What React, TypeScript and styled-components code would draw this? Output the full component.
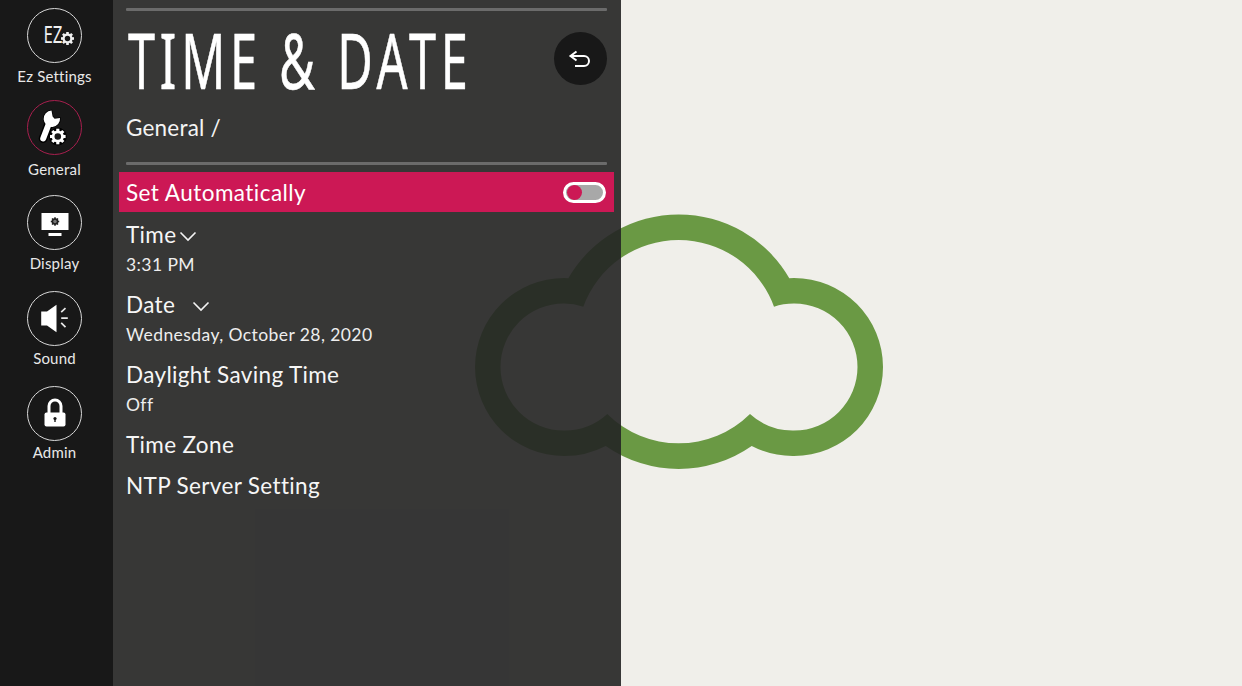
import React from 'react';
import styled, { createGlobalStyle } from 'styled-components';

const GlobalStyle = createGlobalStyle`
    html, body {
        margin: 0;
        padding: 0;
        width: 100%;
        height: 100%;
        overflow: hidden;
        background: #f0efea;
    }
    * {
        box-sizing: border-box;
    }
`;

const Screen = styled.div`
    position: relative;
    display: flex;
    width: 1242px;
    height: 686px;
    background: #f0efea;
    font-family: Lato, "Open Sans", sans-serif;
    color: #fff;
    overflow: hidden;
`;

const CloudLogo = styled.svg`
    position: absolute;
    left: 470px;
    top: 210px;
`;

const Sidebar = styled.div`
    position: relative;
    width: 113px;
    height: 100%;
    background: #181818;
    display: flex;
    flex-direction: column;
    align-items: center;
    padding: 8px 4px 0 0;
`;

const MenuItem = styled.div<{ $top: number }>`
    display: flex;
    flex-direction: column;
    align-items: center;
    margin-top: ${(p) => p.$top}px;
`;

const MenuCircle = styled.div<{ $active?: boolean }>`
    width: 55px;
    height: 55px;
    border-radius: 50%;
    border: 1.5px solid ${(p) => (p.$active ? '#a81f4e' : '#d8d8d8')};
    display: flex;
    align-items: center;
    justify-content: center;
`;

const MenuLabel = styled.div<{ $gap: number }>`
    margin-top: ${(p) => p.$gap}px;
    font-size: 15px;
    line-height: 18px;
    letter-spacing: 0.2px;
    color: #e8e8e8;
`;

const Panel = styled.div`
    position: relative;
    width: 508px;
    height: 100%;
    background: rgba(36, 36, 36, 0.91);
    padding: 8px 14px 0 13px;
`;

const Rule = styled.div`
    height: 3px;
    background: #6b6b6b;
    border-radius: 1px;
`;

const TitleRow = styled.div`
    display: flex;
    align-items: flex-start;
    justify-content: space-between;
    height: 98px;
    padding-top: 21px;
`;

const Title = styled.h1`
    width: 420px;
    flex: none;
    margin: -2px 0 0 2px;
    font-family: "Noto Sans", sans-serif;
    font-weight: 400;
    font-size: 76px;
    line-height: 60px;
    letter-spacing: 7.5px;
    white-space: nowrap;
    -webkit-text-stroke: 0.6px #fff;
    transform: scaleX(0.64);
    transform-origin: left center;
`;

const BackButton = styled.button`
    width: 53px;
    height: 53px;
    border: 0;
    padding: 0;
    border-radius: 50%;
    background: #181818;
    display: flex;
    align-items: center;
    justify-content: center;
`;

const Crumb = styled.div`
    font-size: 22.5px;
    line-height: 30px;
    letter-spacing: 0.2px;
    color: #f4f4f4;
    height: 53px;
    padding-top: 4px;
`;

const SelectedRow = styled.div`
    display: flex;
    align-items: center;
    justify-content: space-between;
    height: 40px;
    margin: 7px -7px 2px -7px;
    padding: 0 8px 0 7px;
    background: #cc1855;
    font-size: 22.5px;
    letter-spacing: 0.45px;
`;

const Toggle = styled.div`
    width: 43px;
    height: 21px;
    border: 3px solid #fff;
    border-radius: 11px;
    background: #a8a8a8;
    display: flex;
    align-items: center;
    overflow: hidden;
    &::before {
        content: '';
        width: 15px;
        height: 15px;
        margin-left: 1px;
        border-radius: 50%;
        background: #cc1855;
    }
`;

const Option = styled.div`
    margin-bottom: 10px;
`;

const OptionLabel = styled.div`
    display: flex;
    align-items: center;
    height: 41px;
    font-size: 22.5px;
    letter-spacing: 0.35px;
    color: #f6f6f6;
`;

const OptionValue = styled.div`
    height: 19px;
    line-height: 19px;
    font-size: 17.5px;
    letter-spacing: 0.42px;
    color: #eeeeee;
`;

const Chevron = styled.svg<{ $gap: number }>`
    margin-left: ${(p) => p.$gap}px;
    margin-top: 4px;
`;

const Gear = ({ cx, cy, r, color, hole }: { cx: number; cy: number; r: number; color: string; hole: string }) => (
    <g>
        <circle cx={cx} cy={cy} r={r * 0.78} fill={color} />
        {[0, 45, 90, 135, 180, 225, 270, 315].map((a) => (
            <rect
                key={a}
                x={cx - r * 0.2}
                y={cy - r}
                width={r * 0.4}
                height={r * 0.5}
                fill={color}
                transform={`rotate(${a} ${cx} ${cy})`}
            />
        ))}
        <circle cx={cx} cy={cy} r={r * 0.42} fill={hole} />
    </g>
);

const EzIcon = () => (
    <svg width="52" height="52" viewBox="0 0 52 52">
        <text x="14.5" y="33" fontFamily="Noto Sans, sans-serif" fontSize="23" fill="#f0f0f0" textLength="19" lengthAdjust="spacingAndGlyphs">EZ</text>
        <Gear cx={38.5} cy={28.5} r={6.5} color="#f0f0f0" hole="#181818" />
    </svg>
);

const WrenchIcon = () => (
    <svg width="52" height="52" viewBox="0 0 52 52">
        <path d="M14.2 36.5 L20.5 20" stroke="#000" strokeWidth="9" strokeLinecap="round" fill="none" />
        <path d="M22.5 8.6 L23.6 14.6 L25.6 16.8 L31 16 A8.2 8.2 0 1 1 22.5 8.6 Z" fill="#fff" stroke="#000" strokeWidth="1.5" paintOrder="stroke" />
        <path d="M14.2 36.5 L20.5 20" stroke="#fff" strokeWidth="6" strokeLinecap="round" fill="none" />
        <circle cx="28.8" cy="34.5" r="9" fill="#000" />
        <Gear cx={28.8} cy={34.5} r={7.8} color="#fff" hole="#181818" />
    </svg>
);

const DisplayIcon = () => (
    <svg width="52" height="52" viewBox="0 0 52 52">
        <rect x="12.5" y="16" width="27" height="17" fill="#fff" />
        <rect x="19.5" y="36" width="13" height="3" fill="#fff" />
        <Gear cx={26} cy={24.5} r={4.2} color="#222" hole="#777" />
    </svg>
);

const SoundIcon = () => (
    <svg width="52" height="52" viewBox="0 0 52 52">
        <path d="M12.2 18.5 L18 18.5 L27.5 11.8 L27.5 39.2 L18 32.5 L12.2 32.5 Z" fill="#fff" />
        <path d="M32.2 19.2 L36.5 15.2 M32.2 25.2 L38.8 25.2 M32.2 29.8 L36.5 34.2" stroke="#e8e8e8" strokeWidth="1.7" fill="none" />
    </svg>
);

const LockIcon = () => (
    <svg width="52" height="52" viewBox="0 0 52 52">
        <path d="M20 25 V18 A6 6 0 0 1 32 18 V25" stroke="#fff" strokeWidth="3" fill="none" />
        <rect x="15.5" y="24.5" width="21" height="14" rx="2" fill="#fff" />
        <circle cx="26" cy="30.5" r="1.6" fill="#181818" />
        <rect x="25.3" y="30.5" width="1.4" height="3.5" fill="#181818" />
    </svg>
);

const menuData = [
    { label: 'Ez Settings', icon: <EzIcon />, top: 0, gap: 4 },
    { label: 'General', icon: <WrenchIcon />, top: 15, gap: 5 },
    { label: 'Display', icon: <DisplayIcon />, top: 17, gap: 4 },
    { label: 'Sound', icon: <SoundIcon />, top: 19, gap: 3 },
    { label: 'Admin', icon: <LockIcon />, top: 19, gap: 2 },
];

const optionData = [
    { label: 'Time', value: '3:31 PM', chevron: 3 },
    { label: 'Date', value: 'Wednesday, October 28, 2020', chevron: 17 },
    { label: 'Daylight Saving Time', value: 'Off' },
];

const DownArrow = ({ gap }: { gap: number }) => (
    <Chevron $gap={gap} width="18" height="11" viewBox="0 0 18 11">
        <path d="M1.5 1.5 L9 9 L16.5 1.5" stroke="#f4f4f4" strokeWidth="1.6" fill="none" />
    </Chevron>
);

const App = () => {
    return (
        <Screen>
            <GlobalStyle />
            <CloudLogo width="420" height="265" viewBox="470 210 420 265">
                <path
                    fillRule="evenodd"
                    fill="#6a9944"
                    d="M568.3 278.3 A127.5 127.5 0 0 1 789.3 278.3 Q791.5 278 794 278 A89 89 0 0 1 883 367 A89 89 0 0 1 794 456 A89 89 0 0 1 751.7 446 A127.5 127.5 0 0 1 605.7 446 A89 89 0 0 1 564 456 A89 89 0 0 1 475 367 A89 89 0 0 1 564 278 Q566 278 568.3 278.3 Z
                       M583.3 306.7 A101.5 101.5 0 0 1 774 306.7 Q783 303.5 794 303.5 A63.5 63.5 0 0 1 857.5 367 A63.5 63.5 0 0 1 794 430.5 A63.5 63.5 0 0 1 750 414 A101.5 101.5 0 0 1 607.3 414 A63.5 63.5 0 0 1 564 430.5 A63.5 63.5 0 0 1 500.5 367 A63.5 63.5 0 0 1 564 303.5 Q574 303.5 583.3 306.7 Z"
                />
            </CloudLogo>
            <Sidebar>
                {menuData.map((item) => (
                    <MenuItem key={item.label} $top={item.top}>
                        <MenuCircle $active={item.label === 'General'}>{item.icon}</MenuCircle>
                        <MenuLabel $gap={item.gap}>{item.label}</MenuLabel>
                    </MenuItem>
                ))}
            </Sidebar>
            <Panel>
                <Rule />
                <TitleRow>
                    <Title>TIME &amp; DATE</Title>
                    <BackButton aria-label="Back">
                        <svg width="53" height="53" viewBox="0 0 53 53">
                            <path
                                d="M22.5 19.5 L16.5 24 L22.5 28.5 M17 24 H30 A5 5 0 0 1 30 34 H21"
                                stroke="#fff"
                                strokeWidth="2"
                                fill="none"
                            />
                        </svg>
                    </BackButton>
                </TitleRow>
                <Crumb>General /</Crumb>
                <Rule />
                <SelectedRow>
                    Set Automatically
                    <Toggle />
                </SelectedRow>
                {optionData.map((item) => (
                    <Option key={item.label}>
                        <OptionLabel>
                            {item.label}
                            {item.chevron !== undefined && <DownArrow gap={item.chevron} />}
                        </OptionLabel>
                        <OptionValue>{item.value}</OptionValue>
                    </Option>
                ))}
                <OptionLabel>Time Zone</OptionLabel>
                <OptionLabel>NTP Server Setting</OptionLabel>
            </Panel>
        </Screen>
    );
};

export default App;
